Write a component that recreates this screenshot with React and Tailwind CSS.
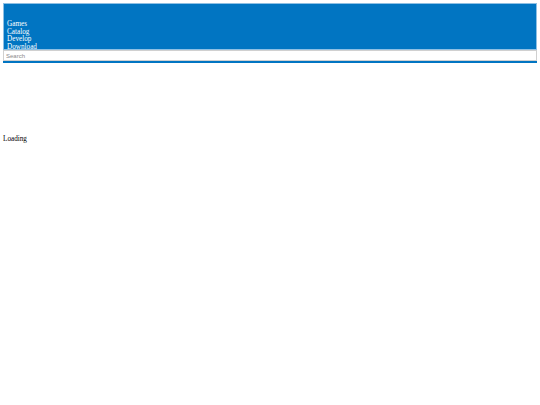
export default function App() {
  return (
    <div className="min-h-[405px] bg-white p-[3px] font-['Liberation_Serif',serif]">
      <header className="h-[47px] border border-[#8ec0e4] bg-[#0175c2] px-[3px] pt-[17px]">
        <nav className="flex flex-col text-[7.2px] leading-[7.7px] text-white">
          <span>Games</span>
          <span>Catalog</span>
          <span>Develop</span>
          <span>Download</span>
        </nav>
      </header>
      <div className="border-b-2 border-[#0175c2]">
        <input
          type="text"
          placeholder="Search"
          className="block h-[11px] w-full border border-[#d0d0d0] px-[2px] font-['Liberation_Sans',sans-serif] text-[6px] outline-none placeholder:text-[#8a8a8a]"
        />
      </div>
      <p className="mt-[72px] text-[7.2px] leading-[8px] text-black">Loading</p>
    </div>
  );
}
